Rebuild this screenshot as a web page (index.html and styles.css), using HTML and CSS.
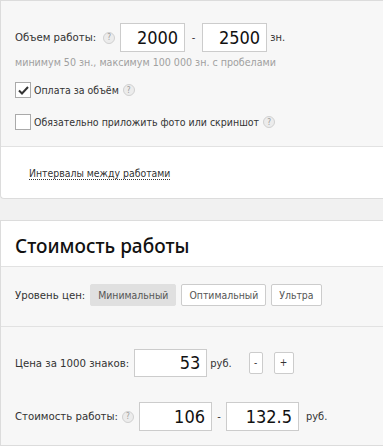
FILE: index.html
```html
<!DOCTYPE html>
<html lang="ru">
<head>
  <meta charset="UTF-8" />
  <title>Стоимость работы</title>
  <link rel="stylesheet" href="styles.css">
</head>
<body>
  <div class="card card-top">
    <div class="section grey volume">
      <div class="row">
        <span class="label">Объем работы:</span>
        <span class="help">?</span>
        <span class="num-input">2000</span>
        <span class="dash">-</span>
        <span class="num-input">2500</span>
        <span class="unit">зн.</span>
      </div>
      <div class="hint">минимум 50 зн., максимум 100 000 зн. с пробелами</div>
      <label class="check first">
        <span class="box">
          <svg width="11" height="9" viewBox="0 0 11 9"><path d="M1 4.5 L4 7.5 L10 1" fill="none" stroke="#333" stroke-width="2"/></svg>
        </span>
        Оплата за объём <span class="help">?</span>
      </label>
      <label class="check">
        <span class="box"></span>
        Обязательно приложить фото или скриншот <span class="help">?</span>
      </label>
    </div>
    <div class="section intervals">
      <a class="dotted">Интервалы между работами</a>
    </div>
  </div>

  <div class="card card-price">
    <div class="section head">
      <h2>Стоимость работы</h2>
    </div>
    <div class="section grey levels">
      <span class="label">Уровень цен:</span>
      <span class="lvl active">Минимальный</span>
      <span class="lvl">Оптимальный</span>
      <span class="lvl">Ультра</span>
    </div>
    <div class="section grey prices">
      <div class="row">
        <span class="label">Цена за 1000 знаков:</span>
        <span class="num-input wide">53</span>
        <span class="unit">руб.</span>
        <span class="step minus">-</span>
        <span class="step">+</span>
      </div>
      <div class="row total">
        <span class="label">Стоимость работы:</span>
        <span class="help">?</span>
        <span class="num-input wide tall">106</span>
        <span class="dash">-</span>
        <span class="num-input wide tall">132.5</span>
        <span class="unit rub">руб.</span>
      </div>
    </div>
  </div>
</body>
</html>
```

FILE: styles.css
```css
* {
  box-sizing: border-box;
  margin: 0;
  padding: 0;
}

body {
  font-family: "DejaVu Sans Condensed", "DejaVu Sans", sans-serif;
  font-size: 11px;
  color: #333;
  background: #f1f1f1;
  width: 400px;
}

/* Cards */
.card {
  background: #fff;
  border: 1px solid #dcdcdc;
  border-right: none;
}

.card-top {
  border-radius: 0 0 0 4px;
}

.card-price {
  margin-top: 21px;
}

.section {
  border-top: 1px solid #e2e2e2;
}

.section:first-child {
  border-top: none;
}

.grey {
  background: #f7f7f7;
}

.row {
  display: flex;
  align-items: center;
}

.label {
  font-size: 11.3px;
  margin-right: 5px;
}

/* Help icon */
.help {
  display: inline-flex;
  align-items: center;
  justify-content: center;
  width: 12px;
  height: 12px;
  border-radius: 50%;
  background: #ececec;
  border: 1px solid #d0d0d0;
  color: #999;
  font-size: 8px;
  margin-right: 5px;
  vertical-align: middle;
}

.num-input {
  display: inline-block;
  width: 65px;
  height: 29px;
  line-height: 27px;
  border: 1px solid #ccc;
  background: #fff;
  text-align: right;
  padding-right: 6px;
  font-size: 18px;
  color: #111;
}

.volume .label {
  margin-right: 7px;
}

.num-input.wide {
  width: 73px;
  height: 28px;
  line-height: 26px;
}

.num-input.tall {
  height: 29px;
  line-height: 27px;
}

.dash {
  width: 17px;
  text-align: center;
}

.prices .dash {
  width: 14px;
}

.unit {
  margin-left: 3px;
}

.unit.rub {
  margin-left: 7px;
}

/* Volume block */
.volume {
  padding: 22px 14px 15px;
}

.hint {
  color: #a0a0a0;
  font-size: 10.6px;
  margin-top: 3px;
  line-height: 14px;
}

.check {
  display: flex;
  align-items: center;
  margin-top: 14px;
  height: 18px;
  font-size: 10.5px;
}

.check.first {
  margin-top: 12px;
}

.check .help {
  margin-left: 4px;
}

.box {
  display: inline-flex;
  align-items: center;
  justify-content: center;
  width: 16px;
  height: 16px;
  border: 1px solid #aaa;
  background: #fff;
  margin-right: 3px;
}

/* Intervals */
.intervals {
  padding: 18px 28px 17px;
  line-height: 16px;
  font-size: 10.4px;
}

.dotted {
  border-bottom: 1px dotted #333;
  color: #333;
}

/* Price card */
.head {
  padding: 13px 14px 8px;
}

h2 {
  font-family: "Noto Sans", sans-serif;
  font-size: 19px;
  font-weight: 500;
  line-height: 24px;
  color: #111;
}

.levels {
  display: flex;
  align-items: center;
  padding: 17px 14px 20px;
}

.levels .label {
  margin-right: 5px;
}

.lvl {
  height: 22px;
  line-height: 20px;
  padding: 0 7px;
  border: 1px solid #ccc;
  background: #fff;
  color: #555;
  margin-right: 5px;
  border-radius: 2px;
  font-size: 10.4px;
}

.lvl.active {
  background: #e0e0e0;
  border-color: #e0e0e0;
}

.prices {
  padding: 22px 14px 14px;
}

.prices .label {
  margin-right: 5px;
}

.prices .row.total {
  margin-top: 25px;
}

.prices .total .label {
  margin-right: 4px;
}

.prices .total .help {
  margin-right: 5px;
}

.step {
  display: inline-block;
  width: 20px;
  height: 22px;
  line-height: 20px;
  text-align: center;
  border: 1px solid #ccc;
  background: #fff;
  border-radius: 2px;
  margin-left: 4px;
  font-size: 10px;
}

.step.minus {
  width: 14px;
  margin-left: 17px;
  margin-right: 7px;
}
```
